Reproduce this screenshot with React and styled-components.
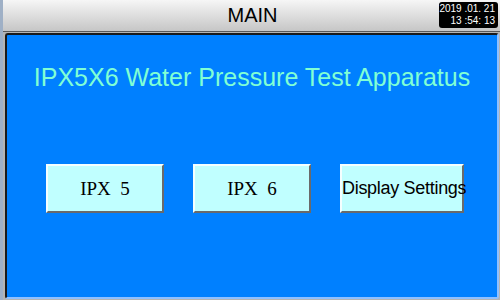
import React from "react";
import styled, { createGlobalStyle } from "styled-components";

const GlobalStyle = createGlobalStyle`
  html, body {
    margin: 0;
    padding: 0;
    background: #b8b8b8;
  }
`;

const Screen = styled.div`
  width: 500px;
  height: 300px;
  box-sizing: border-box;
  display: flex;
  flex-direction: column;
  border-left: 3px solid #9fb0c6;
  background: #b4b4b4;
  font-family: "Liberation Sans", Arial, sans-serif;
`;

const Header = styled.div`
  height: 31px;
  flex-shrink: 0;
  display: grid;
  grid-template-columns: 1fr auto 1fr;
  align-items: center;
  background: linear-gradient(#f6f6f6, #d9d9d9 60%, #c6c6c6);
  border-bottom: 1px solid #5a5a5a;
`;

const Title = styled.div`
  grid-column: 2;
  font-size: 20px;
  color: #000;
  padding-left: 2px;
`;

const Clock = styled.div`
  grid-column: 3;
  justify-self: end;
  align-self: start;
  margin: 2px 2px 0 0;
  width: 59px;
  height: 26px;
  box-sizing: border-box;
  padding: 1px 3px 0 0;
  background: #000;
  border-radius: 3px;
  color: #fff;
  font-size: 10px;
  line-height: 12px;
  text-align: right;
  white-space: pre;
`;

const Panel = styled.div`
  flex: 1;
  margin: 1px 1px 1px 2px;
  background: #0080ff;
  border: 2px solid;
  border-color: #1a1a1a #8fc0ff #8fc0ff #1a1a1a;
  border-radius: 3px;
  display: flex;
  flex-direction: column;
`;

const Heading = styled.h1`
  margin: 28px 0 0;
  font-weight: normal;
  font-size: 25px;
  color: #80ffd4;
  text-align: center;
`;

const ButtonRow = styled.div`
  display: flex;
  gap: 29px;
  margin-top: 72px;
  padding-left: 39px;
`;

const Button = styled.button`
  width: ${(p) => p.w}px;
  height: 49px;
  box-sizing: border-box;
  padding: 0;
  background: #c0ffff;
  border: 2px solid;
  border-color: #f4ffff #6a6a6a #6a6a6a #f4ffff;
  color: #000;
  font-family: ${(p) =>
    p.serif ? '"Liberation Serif", "Times New Roman", serif' : '"Liberation Sans", Arial, sans-serif'};
  font-size: ${(p) => (p.serif ? 19 : 18)}px;
  letter-spacing: ${(p) => (p.serif ? 0 : -0.3)}px;
  white-space: pre;
  overflow: visible;
`;

export default function App() {
  return (
    <>
      <GlobalStyle />
      <Screen>
        <Header>
          <Title>MAIN</Title>
          <Clock>{"2019 .01. 21\n13 :54: 13"}</Clock>
        </Header>
        <Panel>
          <Heading>IPX5X6 Water Pressure Test Apparatus</Heading>
          <ButtonRow>
            <Button w={118} serif>{"IPX  5"}</Button>
            <Button w={118} serif>{"IPX  6"}</Button>
            <Button w={124}>Display Settings</Button>
          </ButtonRow>
        </Panel>
      </Screen>
    </>
  );
}
